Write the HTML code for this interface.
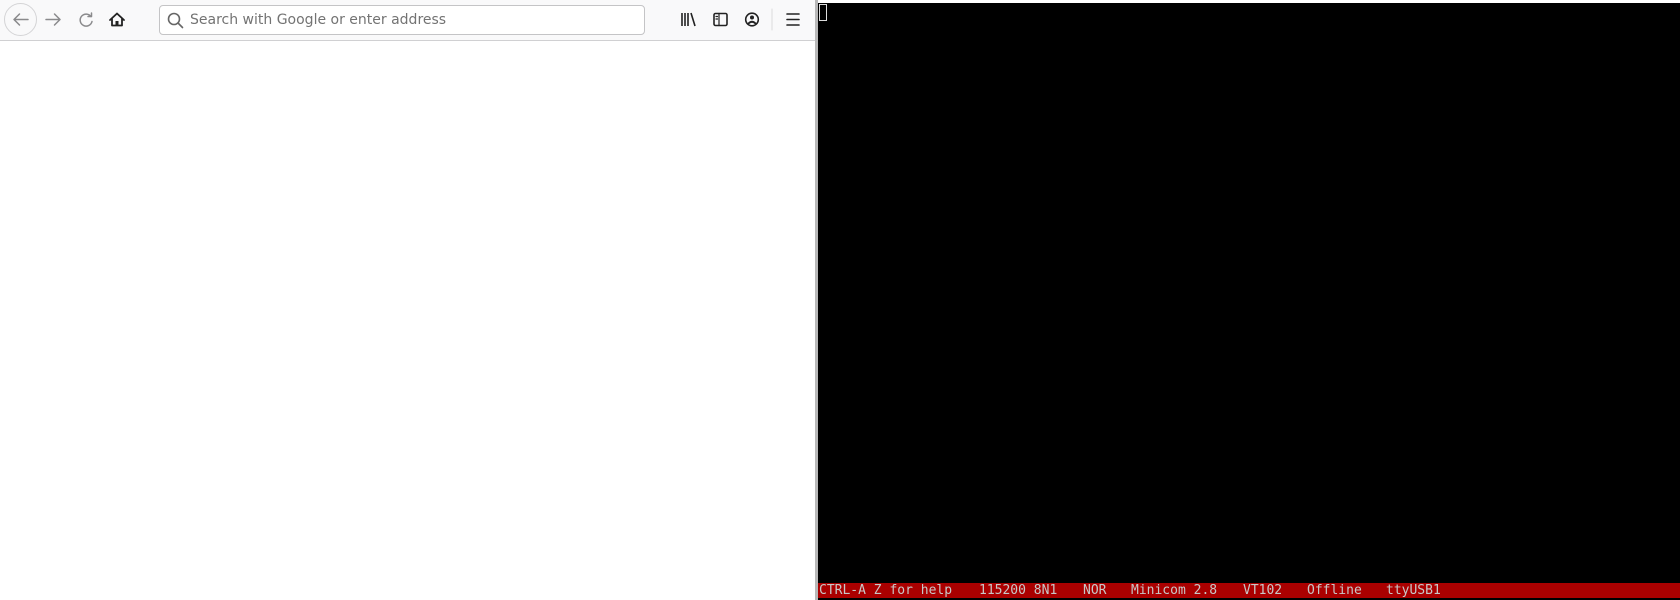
<!DOCTYPE html>
<html><head><style>
body{margin:0;width:1680px;height:600px;position:relative;overflow:hidden;background:#fff;font-family:"Liberation Sans","DejaVu Sans",sans-serif}
#tb{position:absolute;left:0;top:0;width:815px;height:40px;background:#f9f9fa;border-bottom:1px solid #d0d0d2}
#url{position:absolute;left:159px;top:5px;width:486px;height:30px;border:1px solid #c4c4c6;border-radius:4px;background:#fff;box-sizing:border-box}
#url span{position:absolute;left:30px;top:6px;color:#737373;font-family:"DejaVu Sans",sans-serif;font-size:14px}
svg{position:absolute}
#div{position:absolute;left:815px;top:0;width:3px;height:600px;background:#b8b8b8}
#term{position:absolute;left:818px;top:3px;width:862px;height:597px;background:#000}
#cur{position:absolute;left:819px;top:4px;width:8px;height:17px;border:1px solid #ddd;box-sizing:border-box}
#bar{position:absolute;left:818px;top:583px;width:862px;height:15px;background:#aa0000}
#bar span{position:absolute;top:0;font-family:"DejaVu Sans Mono","Liberation Mono",monospace;font-size:13px;line-height:15px;color:#c8c8c8;white-space:pre}
</style></head><body>
<div id="tb">
<svg width="815" height="40" fill="none" stroke="#8a8a8c" stroke-width="1.5" stroke-linecap="round" stroke-linejoin="round">
<circle cx="20.5" cy="19.5" r="16" stroke="#d4d4d6" stroke-width="1" fill="#f9f9fa"/>
<path d="M28 19.5H14M19.5 14l-5.5 5.5 5.5 5.5"/>
<path d="M46 19.5h14M54.5 14l5.5 5.5-5.5 5.5"/>
<path d="M91 16.5a6 6 0 1 0 1 5" /><path d="M88 16.5h3.5v-3.5"/>
<path d="M110 20l7-6.5 7 6.5M112 18.5v7h10v-7" stroke="#222" stroke-width="1.8"/><rect x="115.5" y="21" width="3" height="4.5" fill="#222" stroke="none"/>
<path d="M682 13v13M685 13v13M688 13v13M691 13l4 13" stroke="#222" stroke-width="1.6" stroke-linecap="butt"/>
<rect x="714" y="13.5" width="13" height="12" rx="1.5" stroke="#222" stroke-width="1.6"/><path d="M719 13.5v12M716 16.5h1.5M716 19h1.5" stroke="#222" stroke-width="1.2"/>
<circle cx="752" cy="19.5" r="6.3" stroke="#222" stroke-width="1.6"/><circle cx="752" cy="17.5" r="2" fill="#222" stroke="none"/><path d="M748.5 23.5q3.5-3.5 7 0" stroke="#222" stroke-width="1.8"/>
<path d="M772 9v21" stroke="#dadadc" stroke-width="1"/>
<path d="M787 14h12M787 19.5h12M787 25h12" stroke="#222" stroke-width="1.6"/>
</svg>
<div id="url"><svg width="30" height="28" fill="none" stroke="#666" stroke-width="1.6"><circle cx="14" cy="13" r="5.5"/><path d="M18 17l4.5 4.5" stroke-linecap="round"/></svg><span>Search with Google or enter address</span></div>
</div>
<div id="div"></div>
<div id="term"></div>
<div id="cur"></div>
<div id="bar">
<span style="left:1px">CTRL-A Z for help</span>
<span style="left:161px">115200 8N1</span>
<span style="left:265px">NOR</span>
<span style="left:313px">Minicom 2.8</span>
<span style="left:425px">VT102</span>
<span style="left:489px">Offline</span>
<span style="left:568px">ttyUSB1</span>
</div>
</body></html>
